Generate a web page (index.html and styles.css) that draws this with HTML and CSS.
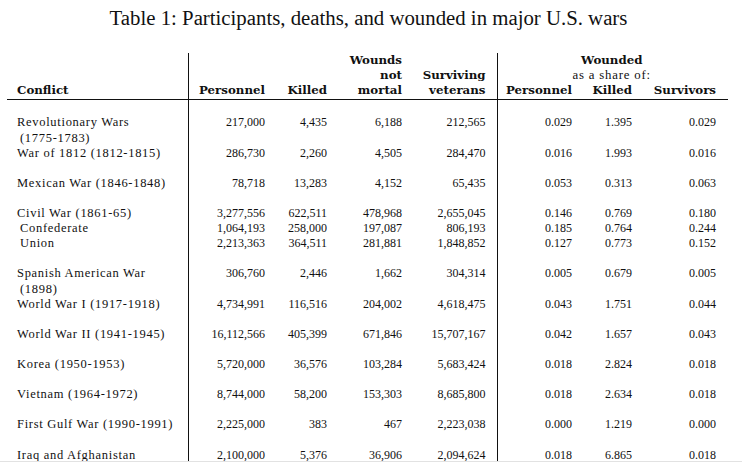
FILE: index.html
```html
<!DOCTYPE html>
<html lang="en">
<head>
<meta charset="utf-8">
<title>Table 1</title>
<link rel="stylesheet" href="styles.css">
</head>
<body>
<div class="page">
  <h1 class="caption">Table 1: Participants, deaths, and wounded in major U.S. wars</h1>
  <table class="wars">
    <colgroup>
      <col class="w-conflict">
      <col class="w-pers">
      <col class="w-killed">
      <col class="w-wounds">
      <col class="w-surv">
      <col class="w-spers">
      <col class="w-skilled">
      <col class="w-ssurv">
    </colgroup>
    <thead>
      <tr class="h1">
        <th class="c1"></th>
        <th></th>
        <th></th>
        <th class="r">Wounds</th>
        <th class="c5"></th>
        <th class="span" colspan="3">Wounded</th>
      </tr>
      <tr class="h2">
        <th class="c1"></th>
        <th></th>
        <th></th>
        <th class="r">not</th>
        <th class="r c5">Surviving</th>
        <th class="span light" colspan="3">as a share of:</th>
      </tr>
      <tr class="h3">
        <th class="c1 l">Conflict</th>
        <th class="r">Personnel</th>
        <th class="r">Killed</th>
        <th class="r">mortal</th>
        <th class="r c5">veterans</th>
        <th class="r">Personnel</th>
        <th class="r">Killed</th>
        <th class="r c8">Survivors</th>
      </tr>
    </thead>
    <tbody>
      <tr class="first">
        <td class="c1">Revolutionary Wars<br><span class="ind">(1775-1783)</span></td>
        <td>217,000</td><td>4,435</td><td>6,188</td><td class="c5">212,565</td>
        <td>0.029</td><td>1.395</td><td class="c8">0.029</td>
      </tr>
      <tr class="gap">
        <td class="c1">War of 1812 (1812-1815)</td>
        <td>286,730</td><td>2,260</td><td>4,505</td><td class="c5">284,470</td>
        <td>0.016</td><td>1.993</td><td class="c8">0.016</td>
      </tr>
      <tr class="gap">
        <td class="c1">Mexican War (1846-1848)</td>
        <td>78,718</td><td>13,283</td><td>4,152</td><td class="c5">65,435</td>
        <td>0.053</td><td>0.313</td><td class="c8">0.063</td>
      </tr>
      <tr>
        <td class="c1">Civil War (1861-65)</td>
        <td>3,277,556</td><td>622,511</td><td>478,968</td><td class="c5">2,655,045</td>
        <td>0.146</td><td>0.769</td><td class="c8">0.180</td>
      </tr>
      <tr>
        <td class="c1"><span class="ind">Confederate</span></td>
        <td>1,064,193</td><td>258,000</td><td>197,087</td><td class="c5">806,193</td>
        <td>0.185</td><td>0.764</td><td class="c8">0.244</td>
      </tr>
      <tr class="gap">
        <td class="c1"><span class="ind">Union</span></td>
        <td>2,213,363</td><td>364,511</td><td>281,881</td><td class="c5">1,848,852</td>
        <td>0.127</td><td>0.773</td><td class="c8">0.152</td>
      </tr>
      <tr>
        <td class="c1">Spanish American War<br><span class="ind">(1898)</span></td>
        <td>306,760</td><td>2,446</td><td>1,662</td><td class="c5">304,314</td>
        <td>0.005</td><td>0.679</td><td class="c8">0.005</td>
      </tr>
      <tr class="gap">
        <td class="c1">World War I (1917-1918)</td>
        <td>4,734,991</td><td>116,516</td><td>204,002</td><td class="c5">4,618,475</td>
        <td>0.043</td><td>1.751</td><td class="c8">0.044</td>
      </tr>
      <tr class="gap">
        <td class="c1">World War II (1941-1945)</td>
        <td>16,112,566</td><td>405,399</td><td>671,846</td><td class="c5">15,707,167</td>
        <td>0.042</td><td>1.657</td><td class="c8">0.043</td>
      </tr>
      <tr class="gap">
        <td class="c1">Korea (1950-1953)</td>
        <td>5,720,000</td><td>36,576</td><td>103,284</td><td class="c5">5,683,424</td>
        <td>0.018</td><td>2.824</td><td class="c8">0.018</td>
      </tr>
      <tr class="gap">
        <td class="c1">Vietnam (1964-1972)</td>
        <td>8,744,000</td><td>58,200</td><td>153,303</td><td class="c5">8,685,800</td>
        <td>0.018</td><td>2.634</td><td class="c8">0.018</td>
      </tr>
      <tr class="gap">
        <td class="c1">First Gulf War (1990-1991)</td>
        <td>2,225,000</td><td>383</td><td>467</td><td class="c5">2,223,038</td>
        <td>0.000</td><td>1.219</td><td class="c8">0.000</td>
      </tr>
      <tr class="gap">
        <td class="c1">Iraq and Afghanistan</td>
        <td>2,100,000</td><td>5,376</td><td>36,906</td><td class="c5">2,094,624</td>
        <td>0.018</td><td>6.865</td><td class="c8">0.018</td>
      </tr>
    </tbody>
  </table>
</div>
</body>
</html>
```

FILE: styles.css
```css
html, body {
  margin: 0;
  padding: 0;
  background: #ffffff;
}

body {
  overflow: hidden;
  color: #111111;
  font-family: "Liberation Serif", "Times New Roman", serif;
}

.page {
  height: 461px;
  overflow: hidden;
  border-bottom: 1px solid #e2e2e2;
  padding-left: 7px;
  box-sizing: content-box;
}

.caption {
  margin: 6px 0 0 0;
  padding-right: 12px;
  font-family: "Liberation Serif", "Times New Roman", serif;
  font-weight: normal;
  font-size: 20.8px;
  line-height: 24px;
  height: 24px;
  text-align: center;
  color: #111111;
}

.wars {
  margin-top: 22.5px;
  width: 721px;
  table-layout: fixed;
  border-collapse: collapse;
  border-spacing: 0;
}

.w-conflict { width: 181px; }
.w-pers { width: 83px; }
.w-killed { width: 62px; }
.w-wounds { width: 75px; }
.w-surv { width: 89px; }
.w-spers { width: 81px; }
.w-skilled { width: 60px; }
.w-ssurv { width: 90px; }

.wars th,
.wars td {
  padding: 0 6px 0 0;
  white-space: nowrap;
}

.wars th {
  font-family: "DejaVu Serif", serif;
  font-weight: bold;
  font-size: 11.8px;
  line-height: 15.1px;
  height: 15.1px;
  vertical-align: bottom;
}

.wars th.r { text-align: right; }
.wars th.l { text-align: left; }
.wars th.span {
  text-align: center;
  padding-right: 2px;
}
.wars th.light {
  font-family: "Liberation Serif", "Times New Roman", serif;
  font-weight: normal;
  font-size: 12.8px;
  letter-spacing: 0.8px;
}

.wars .h3 th {
  padding-bottom: 1.2px;
  border-bottom: 1px solid #111111;
}

.wars td {
  font-size: 12px;
  line-height: 15.1px;
  text-align: right;
  vertical-align: top;
}

.wars .c1 {
  padding-left: 10px;
  padding-right: 4px;
  text-align: left;
  border-right: 1px solid #111111;
}

.wars td.c1 {
  font-size: 12.5px;
  letter-spacing: 0.7px;
}

.wars .c5 {
  padding-right: 11px;
  border-right: 1px solid #111111;
}

.wars .c8 {
  padding-right: 12px;
}

.ind {
  padding-left: 3px;
}

.wars tr.first td {
  padding-top: 15.5px;
}

.wars tr.gap td {
  padding-bottom: 15.1px;
}
```
